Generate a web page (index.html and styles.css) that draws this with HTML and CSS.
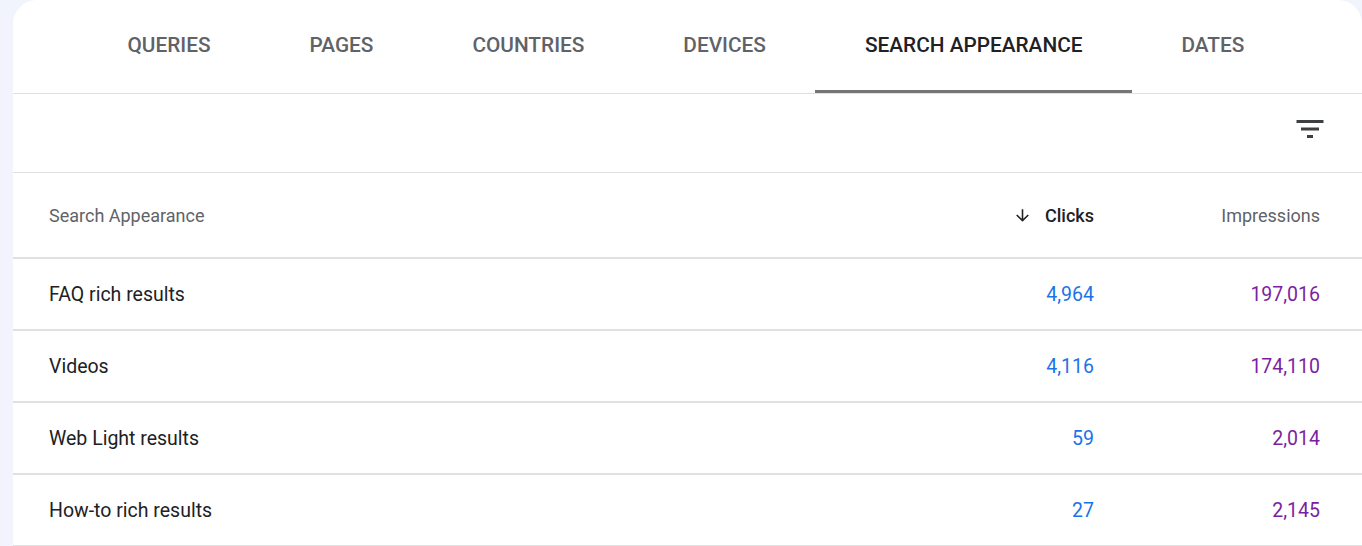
FILE: index.html
```html
<!DOCTYPE html>
<html lang="en">
<head>
<meta charset="utf-8">
<title>Search Appearance</title>
<link rel="stylesheet" href="styles.css">
</head>
<body>
<div class="card">
  <nav class="tabs">
    <div class="tab">QUERIES</div>
    <div class="tab">PAGES</div>
    <div class="tab">COUNTRIES</div>
    <div class="tab">DEVICES</div>
    <div class="tab active">SEARCH APPEARANCE</div>
    <div class="tab">DATES</div>
  </nav>
  <div class="toolbar">
    <svg class="filter-icon" viewBox="0 0 24 24" aria-hidden="true"><path d="M10 18h4v-2h-4v2zM3 6v2h18V6H3zm3 7h12v-2H6v2z"/></svg>
  </div>
  <div class="table">
    <div class="row head">
      <div class="cell name">Search Appearance</div>
      <div class="cell num sorted">
        <svg class="sort-icon" viewBox="0 0 24 24" aria-hidden="true"><path d="M20 12l-1.41-1.41L13 16.17V4h-2v12.17l-5.58-5.59L4 12l8 8 8-8z"/></svg>
        <span>Clicks</span>
      </div>
      <div class="cell num">Impressions</div>
    </div>
    <div class="row">
      <div class="cell name">FAQ rich results</div>
      <div class="cell num clicks">4,964</div>
      <div class="cell num impr">197,016</div>
    </div>
    <div class="row">
      <div class="cell name">Videos</div>
      <div class="cell num clicks">4,116</div>
      <div class="cell num impr">174,110</div>
    </div>
    <div class="row">
      <div class="cell name">Web Light results</div>
      <div class="cell num clicks">59</div>
      <div class="cell num impr">2,014</div>
    </div>
    <div class="row">
      <div class="cell name">How-to rich results</div>
      <div class="cell num clicks">27</div>
      <div class="cell num impr">2,145</div>
    </div>
  </div>
</div>
</body>
</html>
```
FILE: styles.css
```css
html, body {
  margin: 0;
  padding: 0;
  background: #f1f4fc;
  overflow: hidden;
}
body {
  font-family: Roboto, "Liberation Sans", Arial, sans-serif;
  color: #202124;
  padding-left: 13px;
}
.card {
  background: #fff;
  border-radius: 24px 24px 0 0;
  min-height: 560px;
}
.tabs {
  display: flex;
  height: 93px;
  padding-left: 65px;
  border-bottom: 1px solid #e0e0e0;
}
.tab {
  display: flex;
  align-items: center;
  padding: 0 49.5px;
  font-size: 20.8px;
  font-weight: 500;
  color: #5f6368;
  border-bottom: 3px solid transparent;
}
.tab.active {
  color: #202124;
  border-bottom-color: #757575;
}
.toolbar {
  display: flex;
  align-items: flex-start;
  justify-content: flex-end;
  padding: 17px 34px 0 0;
  height: 61px;
  border-bottom: 1px solid #e0e0e0;
}
.filter-icon {
  width: 36px;
  height: 36px;
  fill: #3c4043;
}
.row {
  display: grid;
  grid-template-columns: 1fr 200px 226px;
  align-items: center;
  height: 70px;
  padding: 0 42px 0 36px;
  border-bottom: 2px solid #e0e0e0;
  font-size: 19.5px;
}
.row.head {
  height: 84px;
  font-size: 18px;
  color: #5f6368;
}
.cell.num {
  text-align: right;
}
.sorted {
  display: flex;
  justify-content: flex-end;
  align-items: center;
  color: #202124;
  font-weight: 500;
}
.sort-icon {
  width: 19px;
  height: 19px;
  fill: #202124;
  margin-right: 13px;
}
.clicks {
  color: #1a73e8;
}
.impr {
  color: #7b1fa2;
}
```
